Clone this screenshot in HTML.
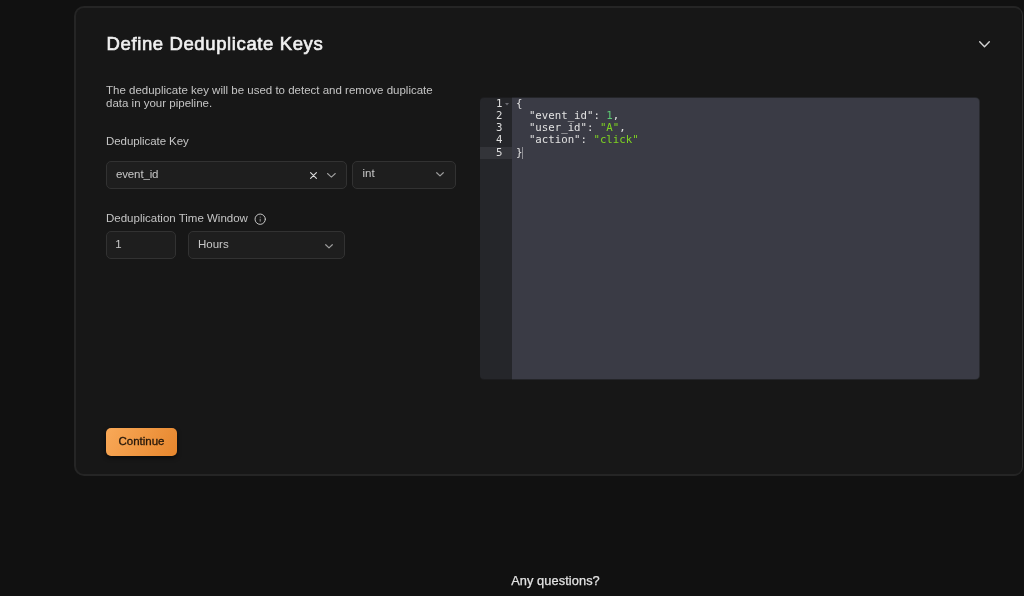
<!DOCTYPE html>
<html lang="en">
<head>
<meta charset="utf-8">
<title>Define Deduplicate Keys</title>
<style>
*{box-sizing:border-box;margin:0;padding:0}
html,body{width:1024px;height:596px;overflow:hidden;background:#111111;}
body{font-family:"Liberation Sans",Arial,sans-serif;color:#e8e8e8;position:relative}
.wrap{position:absolute;left:0;top:0;width:1024px;height:596px;overflow:hidden;will-change:transform}
.card{position:absolute;left:74px;top:6px;width:949px;height:470px;background:#171717;border:2px solid #252525;border-right:1px solid #2d2d2d;border-radius:10px 9px 9px 10px}
.abs{position:absolute;white-space:nowrap}
h1{position:absolute;left:106.5px;top:33px;letter-spacing:0.62px;font-size:18.5px;font-weight:400;-webkit-text-stroke:0.65px #f0f0f0;line-height:22px;color:#f0f0f0;white-space:nowrap}
.desc{left:106px;top:84px;font-size:11.5px;line-height:13px;color:#c5c5c5}
.label{font-size:11.5px;line-height:13px;color:#c5c5c5}
.field{position:absolute;background:#1e1e1e;border:1px solid #323232;border-radius:5px;font-size:11.5px;color:#c8c8c8}
.field span{position:absolute;left:9px;white-space:nowrap;line-height:13px}
svg{position:absolute;overflow:visible}
.editor{position:absolute;left:480px;top:98px;width:499px;height:281px;font-family:"DejaVu Sans Mono","Liberation Mono",monospace;font-size:10.72px;line-height:12.15px}
.gutter{position:absolute;left:0;top:0;width:32px;height:100%;background:#25262a;border-radius:4px 0 0 4px;box-shadow:0 -1px 0 0 rgba(37,38,42,.4),0 1px 0 0 rgba(37,38,42,.4)}
.code{position:absolute;left:32px;top:0;width:467px;height:100%;background:#3a3b45;border-radius:0 4px 4px 0;box-shadow:0 -1px 0 0 rgba(58,59,69,.4),0 1px 0 0 rgba(58,59,69,.4),1px 0 0 0 rgba(58,59,69,.5)}
.ln{position:absolute;left:0;width:22.4px;text-align:right;color:#dedede}
.cl{position:absolute;left:36px;white-space:pre;color:#e2e2e2}
.g{color:#7ed321}.n{color:#5ccb73}
.btn{position:absolute;left:106px;top:428px;width:71px;height:28px;border-radius:5px;background:linear-gradient(120deg,#f9a958 0%,#e6862d 100%);box-shadow:0 2px 4px rgba(0,0,0,.55);color:#24160a;font-size:11.5px;text-align:center;line-height:26px;-webkit-text-stroke:0.3px #1f1408}
.foot{left:0;width:1111px;text-align:center;top:573px;font-size:12.8px;line-height:16px;color:#e4e4e4;letter-spacing:0.08px;-webkit-text-stroke:0.25px #e4e4e4}
</style>
</head>
<body>
<div class="wrap">
<div class="card"></div>
<h1>Define Deduplicate Keys</h1>
<svg style="left:978.7px;top:40.7px" width="11" height="7" viewBox="0 0 11 7"><path d="M0.7 0.8 L5.5 5.8 L10.3 0.8" fill="none" stroke="#d2d2d2" stroke-width="1.4" stroke-linecap="round" stroke-linejoin="round"/></svg>

<div class="abs desc">The deduplicate key will be used to detect and remove duplicate<br>data in your pipeline.</div>
<div class="abs label" style="left:106px;top:135px;letter-spacing:-0.07px">Deduplicate Key</div>

<div class="field" style="left:106px;top:161px;width:241px;height:28px"><span style="top:6px;letter-spacing:-0.14px">event_id</span>
<svg style="left:203.25px;top:9.8px" width="7" height="7" viewBox="0 0 7 7"><path d="M0.6 0.6 L6.4 6.4 M6.4 0.6 L0.6 6.4" fill="none" stroke="#dadada" stroke-width="1.15" stroke-linecap="round"/></svg>
<svg style="left:219.5px;top:10.9px" width="9" height="5" viewBox="0 0 9 5"><path d="M0.5 0.5 L4.4 4.1 L8.3 0.5" fill="none" stroke="#a0a0a0" stroke-width="1.05" stroke-linecap="round" stroke-linejoin="round"/></svg>
</div>
<div class="field" style="left:352px;top:161px;width:104px;height:28px"><span style="top:5px;left:9.5px">int</span>
<svg style="left:82.8px;top:10.4px" width="8" height="5" viewBox="0 0 8 5"><path d="M0.7 0.7 L4 3.9 L7.3 0.7" fill="none" stroke="#9c9c9c" stroke-width="1.2" stroke-linecap="round" stroke-linejoin="round"/></svg>
</div>

<div class="abs label" style="left:106px;top:212px">Deduplication Time Window</div>
<svg style="left:254.1px;top:212.7px" width="12.4" height="12.4" viewBox="0 0 24 24" fill="none" stroke="#c8c8c8" stroke-width="1.9" stroke-linecap="round" stroke-linejoin="round"><circle cx="12" cy="12" r="10"/><path d="M12 16v-4" stroke-width="1.6" stroke="#b4b4b4"/><path d="M12 8h.01" stroke-width="1.8" stroke="#b4b4b4"/></svg>

<div class="field" style="left:106px;top:231px;width:70px;height:28px"><span style="top:6px;left:8.3px">1</span></div>
<div class="field" style="left:188px;top:231px;width:157px;height:28px"><span style="top:6px">Hours</span>
<svg style="left:136.3px;top:11.5px" width="8" height="5" viewBox="0 0 8 5"><path d="M0.7 0.7 L4 3.9 L7.3 0.7" fill="none" stroke="#9c9c9c" stroke-width="1.2" stroke-linecap="round" stroke-linejoin="round"/></svg>
</div>

<div class="editor">
<div class="gutter"></div>
<div class="code"></div>
<div style="position:absolute;left:0;top:48.6px;width:32px;height:12.1px;background:#333439"></div>
<div class="ln" style="top:0px">1</div>
<div class="ln" style="top:12.15px">2</div>
<div class="ln" style="top:24.3px">3</div>
<div class="ln" style="top:36.45px">4</div>
<div class="ln" style="top:48.6px">5</div>
<svg style="left:25.4px;top:4.6px" width="4" height="3" viewBox="0 0 4 3"><path d="M0 0 H4 L2 2.6 Z" fill="#6b6c72"/></svg>
<div class="cl" style="top:0px">{</div>
<div class="cl" style="top:12.15px">  "event_id": <span class="n">1</span>,</div>
<div class="cl" style="top:24.3px">  "user_id": <span class="g">"A"</span>,</div>
<div class="cl" style="top:36.45px">  "action": <span class="g">"click"</span></div>
<div class="cl" style="top:48.6px">}</div>
<div style="position:absolute;left:41.7px;top:48.6px;width:1px;height:12.1px;background:#8e8e94"></div>
</div>

<div class="btn">Continue</div>
<div class="abs foot">Any questions?</div>
</div>
</body>
</html>
